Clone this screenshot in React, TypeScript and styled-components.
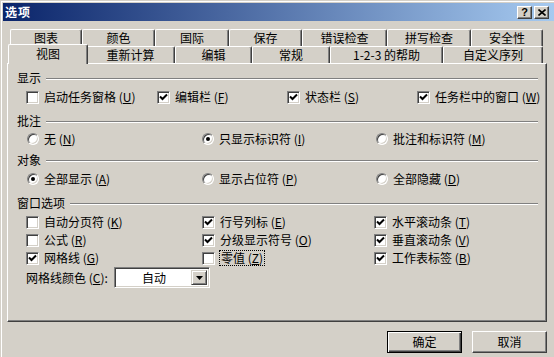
import React from 'react';
import styled, { createGlobalStyle } from 'styled-components';

const GlobalStyle = createGlobalStyle`
  html, body { margin: 0; padding: 0; background: #D4D0C8; }
  body {
    font-family: "Noto Sans CJK SC", "Noto Sans", sans-serif;
    font-size: 12px;
    color: #000;
  }
  * { box-sizing: border-box; }
`;

const FACE = '#D4D0C8';
const SHADOW = '#808080';
const DARK = '#404040';

const Window = styled.div`
  width: 554px;
  height: 357px;
  background: ${FACE};
  border-left: 1px solid ${FACE};
  border-top: 1px solid ${FACE};
  box-shadow: inset 1px 1px 0 #fff;
  padding: 2px 0 0 2px;
  display: flex;
  flex-direction: column;
  overflow: hidden;
`;

const TitleBar = styled.div`
  height: 18px;
  display: flex;
  align-items: center;
  padding: 0 5px 0 2px;
  background: linear-gradient(to right, #0a246a, #a6caf0);
`;

const TitleText = styled.span`
  flex: 1;
  color: #fff;
  font-weight: bold;
  font-size: 12px;
  line-height: 14px;
  letter-spacing: 1px;
`;

const CaptionButtons = styled.div`
  display: flex;
  gap: 2px;
`;

const CaptionButton = styled.div`
  width: 15px;
  height: 13px;
  background: ${FACE};
  border-top: 1px solid #fff;
  border-left: 1px solid #fff;
  border-right: 1px solid ${DARK};
  border-bottom: 1px solid ${DARK};
  box-shadow: inset -1px -1px 0 ${SHADOW};
  display: flex;
  align-items: center;
  justify-content: center;
  font-family: "Liberation Sans", Arial, sans-serif;
  font-weight: bold;
  font-size: 11px;
  line-height: 11px;
`;

const Body = styled.div`
  flex: 1;
  display: flex;
  flex-direction: column;
  padding: 8px 7px 0 4px;
`;

const TabRow = styled.div<{ $front?: boolean }>`
  display: flex;
  height: 17px;
  padding-left: 3px;
  position: relative;
  z-index: ${p => (p.$front ? 2 : 1)};
`;

const Tab = styled.div<{ $w: number; $active?: boolean }>`
  width: ${p => p.$w + (p.$active ? 4 : 0)}px;
  height: ${p => (p.$active ? 20 : 17)}px;
  margin: ${p => (p.$active ? '-2px -2px 0 -2px' : '0')};
  position: relative;
  z-index: ${p => (p.$active ? 3 : 1)};
  background: ${FACE};
  border-top: 1px solid #fff;
  border-left: 1px solid #fff;
  border-right: 1px solid ${DARK};
  border-radius: 2px 2px 0 0;
  box-shadow: inset -1px 0 0 ${SHADOW};
  display: flex;
  align-items: ${p => (p.$active ? 'flex-start' : 'center')};
  padding-top: ${p => (p.$active ? '2px' : '0')};
  justify-content: center;
  line-height: 14px;
  white-space: nowrap;
`;

const Panel = styled.div`
  height: 259px;
  background: ${FACE};
  border-top: 1px solid #fff;
  border-left: 1px solid #fff;
  border-right: 1px solid ${DARK};
  border-bottom: 1px solid ${DARK};
  box-shadow: inset -1px -1px 0 ${SHADOW};
  padding: 7px 8px 0 9px;
  display: flex;
  flex-direction: column;
`;

const SectionHeader = styled.div<{ $mt?: number }>`
  display: flex;
  align-items: center;
  height: 14px;
  margin-top: ${p => p.$mt ?? 0}px;
  line-height: 14px;
`;

const HeaderLine = styled.div`
  flex: 1;
  height: 2px;
  margin-left: 5px;
  border-top: 1px solid ${SHADOW};
  border-bottom: 1px solid #fff;
  margin-top: 2px;
`;

const OptionGrid = styled.div<{ $cols: string; $mt?: number }>`
  display: grid;
  grid-template-columns: ${p => p.$cols};
  grid-auto-rows: 18px;
  margin-top: ${p => p.$mt ?? 0}px;
  padding-left: 9px;
`;

const Option = styled.label`
  display: flex;
  align-items: center;
  gap: 5px;
  white-space: nowrap;
  line-height: 14px;
`;

const CheckBox = styled.span`
  width: 13px;
  height: 13px;
  flex: none;
  background: #fff;
  border-top: 1px solid ${SHADOW};
  border-left: 1px solid ${SHADOW};
  border-right: 1px solid #fff;
  border-bottom: 1px solid #fff;
  box-shadow: inset 1px 1px 0 ${DARK}, inset -1px -1px 0 ${FACE};
  display: flex;
  align-items: center;
  justify-content: center;
`;

const Radio = styled.span`
  width: 12px;
  height: 12px;
  flex: none;
  margin-left: 1px;
  border-radius: 50%;
  background: #fff;
  border: 1px solid;
  border-color: ${SHADOW} #fff #fff ${SHADOW};
  box-shadow: inset 1px 1px 0 ${DARK}, inset -1px -1px 0 ${FACE};
  display: flex;
  align-items: center;
  justify-content: center;
`;

const Dot = styled.span`
  width: 4px;
  height: 4px;
  border-radius: 50%;
  background: #000;
`;

const Focus = styled.span`
  outline: 1px dotted #000;
  outline-offset: 0;
  padding: 0 1px;
`;

const ComboRow = styled.div`
  display: flex;
  align-items: center;
  margin-top: 0px;
  padding-left: 9px;
  height: 21px;
`;

const ComboLabel = styled.span`
  width: 88px;
  white-space: nowrap;
  line-height: 14px;
`;

const Combo = styled.div`
  width: 96px;
  height: 21px;
  background: #fff;
  border-top: 1px solid ${SHADOW};
  border-left: 1px solid ${SHADOW};
  border-right: 1px solid #fff;
  border-bottom: 1px solid #fff;
  box-shadow: inset 1px 1px 0 ${DARK}, inset -1px -1px 0 ${FACE};
  display: flex;
  align-items: center;
  padding: 2px;
`;

const ComboValue = styled.span`
  flex: 1;
  text-align: center;
  line-height: 14px;
`;

const ComboButton = styled.span`
  width: 16px;
  height: 15px;
  background: ${FACE};
  border-top: 1px solid ${FACE};
  border-left: 1px solid ${FACE};
  border-right: 1px solid ${DARK};
  border-bottom: 1px solid ${DARK};
  box-shadow: inset 1px 1px 0 #fff, inset -1px -1px 0 ${SHADOW};
  display: flex;
  align-items: center;
  justify-content: center;
`;

const ButtonRow = styled.div`
  display: flex;
  justify-content: flex-end;
  gap: 10px;
  margin-top: 9px;
`;

const Button = styled.div<{ $default?: boolean }>`
  width: 75px;
  height: 22px;
  background: ${FACE};
  display: flex;
  align-items: center;
  justify-content: center;
  line-height: 14px;
  border: 1px solid;
  border-color: ${p => (p.$default ? '#000' : `#fff ${DARK} ${DARK} #fff`)};
  box-shadow: ${p =>
    p.$default
      ? `inset 1px 1px 0 #fff, inset -1px -1px 0 ${DARK}, inset -2px -2px 0 ${SHADOW}`
      : `inset -1px -1px 0 ${SHADOW}`};
`;

const Check = () => (
  <svg width="9" height="9" viewBox="0 0 9 9">
    <path d="M1 3.5 L3.5 6 L8 1.5" stroke="#000" strokeWidth="2" fill="none" />
  </svg>
);

const Key = ({ k }: { k: string }) => (
  <>
    (<u>{k}</u>)
  </>
);

type Opt = { label: string; key: string; checked?: boolean; focus?: boolean };

const CheckOpt = ({ o }: { o: Opt }) => (
  <Option>
    <CheckBox>{o.checked && <Check />}</CheckBox>
    {o.focus ? (
      <Focus>
        {o.label} <Key k={o.key} />
      </Focus>
    ) : (
      <span>
        {o.label} <Key k={o.key} />
      </span>
    )}
  </Option>
);

const RadioOpt = ({ o }: { o: Opt }) => (
  <Option>
    <Radio>{o.checked && <Dot />}</Radio>
    <span>
      {o.label} <Key k={o.key} />
    </span>
  </Option>
);

const backTabs: [string, number][] = [
  ['图表', 72], ['颜色', 73], ['国际', 74], ['保存', 73],
  ['错误检查', 85], ['拼写检查', 84], ['安全性', 72],
];
const frontTabs: [string, number][] = [
  ['视图', 76], ['重新计算', 89], ['编辑', 77], ['常规', 78],
  ['1-2-3 的帮助', 113], ['自定义序列', 100],
];

const display: Opt[] = [
  { label: '启动任务窗格', key: 'U' },
  { label: '编辑栏', key: 'F', checked: true },
  { label: '状态栏', key: 'S', checked: true },
  { label: '任务栏中的窗口', key: 'W', checked: true },
];
const comments: Opt[] = [
  { label: '无', key: 'N' },
  { label: '只显示标识符', key: 'I', checked: true },
  { label: '批注和标识符', key: 'M' },
];
const objects: Opt[] = [
  { label: '全部显示', key: 'A', checked: true },
  { label: '显示占位符', key: 'P' },
  { label: '全部隐藏', key: 'D' },
];
const windowOpts: Opt[] = [
  { label: '自动分页符', key: 'K' },
  { label: '行号列标', key: 'E', checked: true },
  { label: '水平滚动条', key: 'T', checked: true },
  { label: '公式', key: 'R' },
  { label: '分级显示符号', key: 'O', checked: true },
  { label: '垂直滚动条', key: 'V', checked: true },
  { label: '网格线', key: 'G', checked: true },
  { label: '零值', key: 'Z', focus: true },
  { label: '工作表标签', key: 'B', checked: true },
];

export default function App() {
  return (
    <>
      <GlobalStyle />
      <Window>
        <TitleBar>
          <TitleText>选项</TitleText>
          <CaptionButtons>
            <CaptionButton>?</CaptionButton>
            <CaptionButton>
              <svg width="8" height="7" viewBox="0 0 8 7">
                <path d="M0.5 0.5 L7.5 6.5 M7.5 0.5 L0.5 6.5" stroke="#000" strokeWidth="1.6" />
              </svg>
            </CaptionButton>
          </CaptionButtons>
        </TitleBar>
        <Body>
          <TabRow>
            {backTabs.map(([t, w]) => (
              <Tab key={t} $w={w}>{t}</Tab>
            ))}
          </TabRow>
          <TabRow $front>
            {frontTabs.map(([t, w], i) => (
              <Tab key={t} $w={w} $active={i === 0}>{t}</Tab>
            ))}
          </TabRow>
          <Panel>
            <SectionHeader>
              显示<HeaderLine />
            </SectionHeader>
            <OptionGrid $cols="131px 130px 130px 1fr" $mt={3}>
              {display.map(o => <CheckOpt key={o.key} o={o} />)}
            </OptionGrid>
            <SectionHeader $mt={8}>
              批注<HeaderLine />
            </SectionHeader>
            <OptionGrid $cols="175px 174px 1fr" $mt={2}>
              {comments.map(o => <RadioOpt key={o.key} o={o} />)}
            </OptionGrid>
            <SectionHeader $mt={5}>
              对象<HeaderLine />
            </SectionHeader>
            <OptionGrid $cols="175px 174px 1fr" $mt={3}>
              {objects.map(o => <RadioOpt key={o.key} o={o} />)}
            </OptionGrid>
            <SectionHeader $mt={8}>
              窗口选项<HeaderLine />
            </SectionHeader>
            <OptionGrid $cols="176px 172px 1fr" $mt={3}>
              {windowOpts.map(o => <CheckOpt key={o.key} o={o} />)}
            </OptionGrid>
            <ComboRow>
              <ComboLabel>
                网格线颜色 (<u>C</u>):
              </ComboLabel>
              <Combo>
                <ComboValue>自动</ComboValue>
                <ComboButton>
                  <svg width="7" height="4" viewBox="0 0 7 4">
                    <path d="M0 0 H7 L3.5 4 Z" fill="#000" />
                  </svg>
                </ComboButton>
              </Combo>
            </ComboRow>
          </Panel>
          <ButtonRow>
            <Button $default>确定</Button>
            <Button>取消</Button>
          </ButtonRow>
        </Body>
      </Window>
    </>
  );
}
